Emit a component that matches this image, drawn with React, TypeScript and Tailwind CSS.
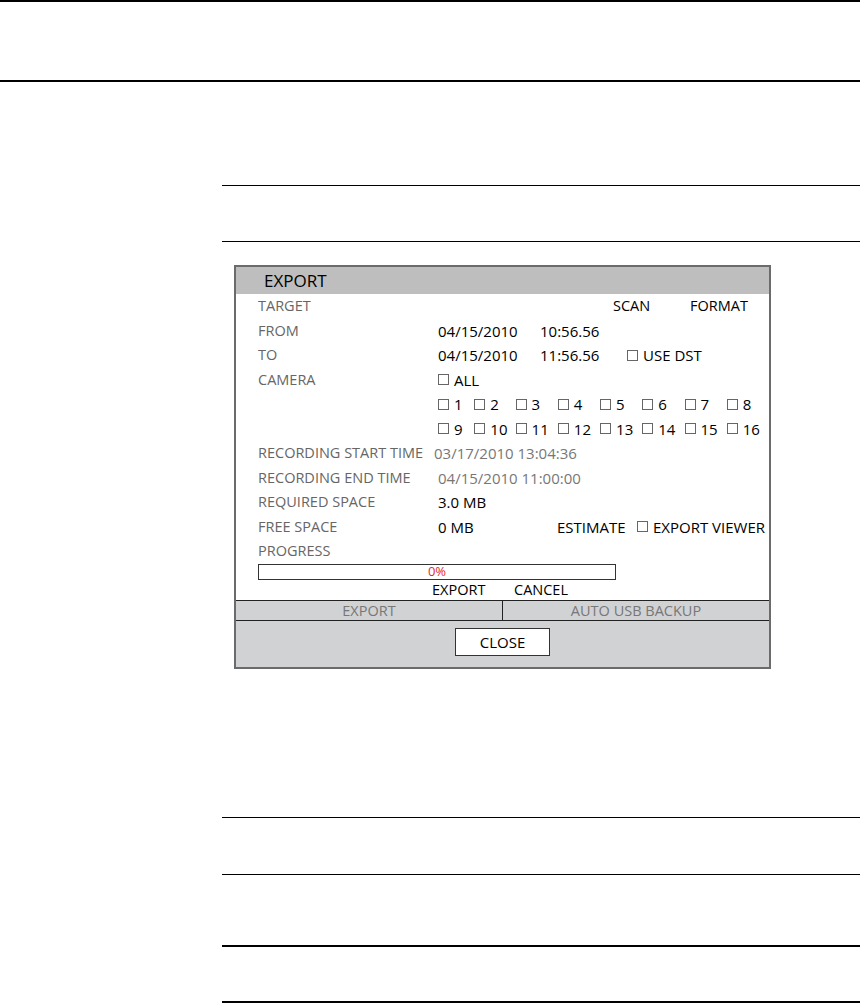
import React from 'react';

const Box = () => (
  <span className="inline-block w-[11px] h-[11px] border border-[#666] bg-white shrink-0" />
);

const Check = ({ label, className = '' }: { label: string; className?: string }) => (
  <span className={`flex items-center gap-[5px] ${className}`}>
    <Box />
    <span>{label}</span>
  </span>
);

const Label = ({ children, w = 'w-[180px]' }: { children?: React.ReactNode; w?: string }) => (
  <span className={`${w} shrink-0 text-[14.5px] text-[#666]`}>{children}</span>
);

const cams1 = ['1', '2', '3', '4', '5', '6', '7', '8'];
const cams2 = ['9', '10', '11', '12', '13', '14', '15', '16'];
const camWidths = ['w-[37px]', 'w-[42px]', 'w-[43px]', 'w-[43px]', 'w-[43px]', 'w-[43px]', 'w-[43px]', 'w-[43px]'];

function ExportDialog() {
  const row = 'flex items-center h-[24.5px] pl-[22px]';
  return (
    <div className="ml-[12px] w-[537px] h-[404px] border-2 border-[#6b6b6b] bg-white flex flex-col text-[15px] text-black">
      {/* title */}
      <div className="h-[27px] bg-[#bebebe] flex items-center pl-[28px] text-[17px]">EXPORT</div>

      <div className={row}>
        <Label w="w-[355px]">TARGET</Label>
        <span className="w-[77px] text-[14.5px]">SCAN</span>
        <span className="text-[14.5px]">FORMAT</span>
      </div>
      <div className={row}>
        <Label>FROM</Label>
        <span className="w-[102px]">04/15/2010</span>
        <span>10:56.56</span>
      </div>
      <div className={row}>
        <Label>TO</Label>
        <span className="w-[102px]">04/15/2010</span>
        <span className="w-[87px]">11:56.56</span>
        <Check label="USE DST" />
      </div>
      <div className={row}>
        <Label>CAMERA</Label>
        <Check label="ALL" />
      </div>
      {[cams1, cams2].map((cams, r) => (
        <div key={r} className={row}>
          <Label />
          {cams.map((c, i) => (
            <Check key={c} label={c} className={camWidths[i]} />
          ))}
        </div>
      ))}
      <div className={row}>
        <Label>RECORDING START TIME</Label>
        <span className="text-[#777] -ml-[4px]">03/17/2010 13:04:36</span>
      </div>
      <div className={row}>
        <Label>RECORDING END TIME</Label>
        <span className="text-[#777]">04/15/2010 11:00:00</span>
      </div>
      <div className={row}>
        <Label>REQUIRED SPACE</Label>
        <span>3.0 MB</span>
      </div>
      <div className={row}>
        <Label>FREE SPACE</Label>
        <span className="w-[119px]">0 MB</span>
        <span className="w-[80px]">ESTIMATE</span>
        <Check label="EXPORT VIEWER" />
      </div>
      <div className={row}>
        <Label>PROGRESS</Label>
      </div>

      {/* progress bar */}
      <div className="pl-[22px] h-[16px]">
        <div className="w-[358px] h-[16px] border border-[#333] flex items-center justify-center text-[13px] leading-none text-[#e8262b]">
          0%
        </div>
      </div>

      <div className="h-[20.5px] flex items-center pl-[196px] text-[14.5px]">
        <span className="w-[82px]">EXPORT</span>
        <span>CANCEL</span>
      </div>

      {/* tabs */}
      <div className="h-[21px] border-y border-[#222] bg-[#d1d2d4] flex text-[#777] text-[14.5px]">
        <div className="w-[267px] border-r border-[#222] flex items-center justify-center">EXPORT</div>
        <div className="flex-1 flex items-center justify-center">AUTO USB BACKUP</div>
      </div>

      {/* footer */}
      <div className="flex-1 bg-[#d1d2d4] flex justify-center pt-[7px]">
        <div className="w-[95px] h-[28px] border border-[#333] bg-white flex items-center justify-center text-[15px]">
          CLOSE
        </div>
      </div>
    </div>
  );
}

export default function App() {
  return (
    <div className="w-[860px] h-[1003px] bg-white font-['Open_Sans',sans-serif] overflow-hidden">
      <div className="h-[2px] bg-black" />
      <div className="h-[78px]" />
      <div className="h-[2px] bg-black" />

      <div className="ml-[222px]">
        <div className="mt-[103px] h-px bg-black" />
        <div className="mt-[55px] h-px bg-black" />
        <div className="mt-[23px]">
          <ExportDialog />
        </div>
        <div className="mt-[148px] h-px bg-black" />
        <div className="mt-[56px] h-px bg-black" />
        <div className="mt-[70px] h-[2px] bg-black" />
        <div className="mt-[54px] h-[2px] bg-black" />
      </div>
    </div>
  );
}
